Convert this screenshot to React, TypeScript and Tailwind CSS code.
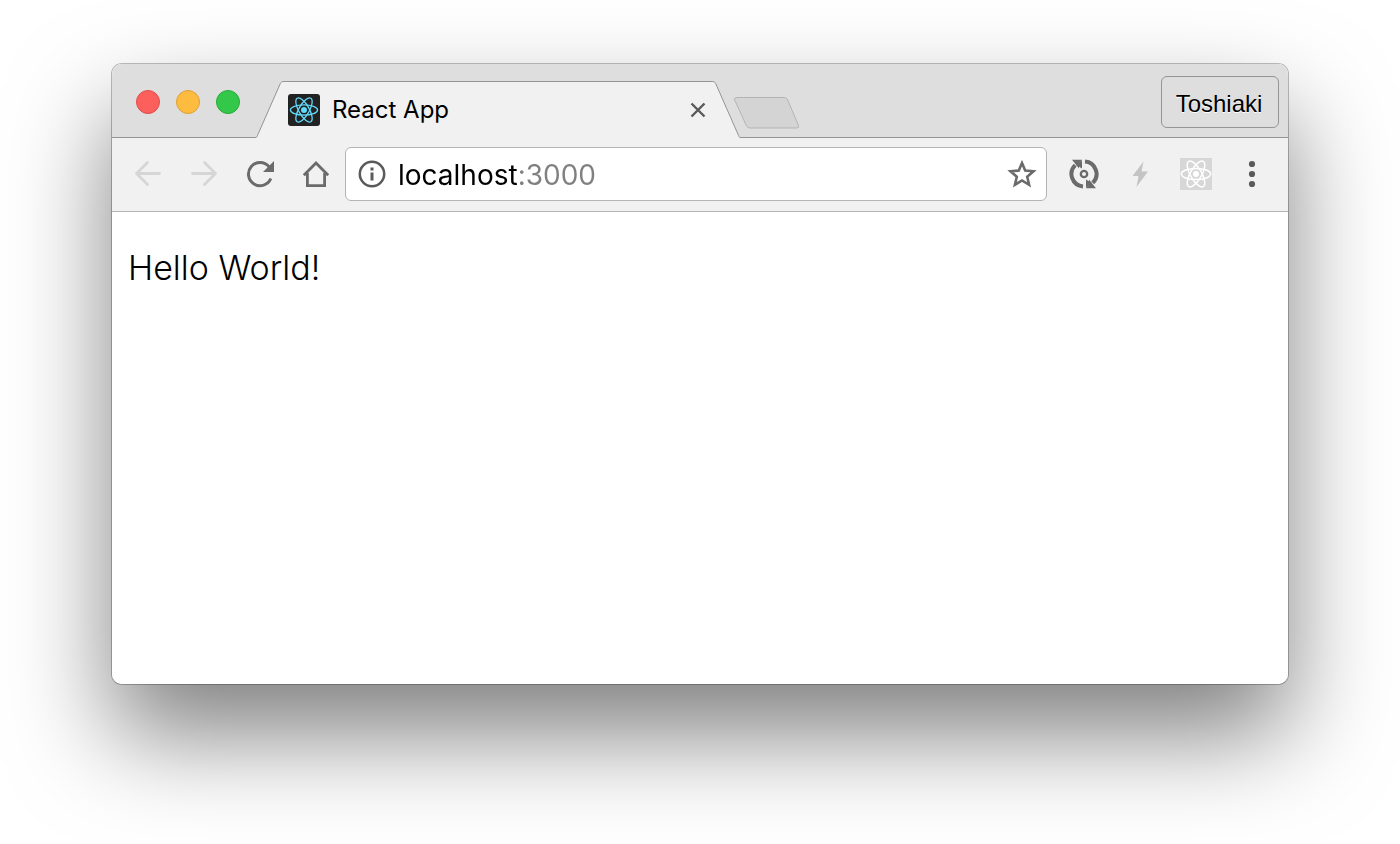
import { useState } from "react";
import type { ReactNode } from "react";

const ReactLogo = ({ className, dot = 3 }: { className?: string; dot?: number }) => (
  <svg viewBox="0 0 32 32" className={className} fill="none" stroke="currentColor" strokeWidth="1.3">
    <circle cx="16" cy="16" r={dot} fill="currentColor" stroke="none" />
    <ellipse cx="16" cy="16" rx="13.6" ry="5.2" />
    <ellipse cx="16" cy="16" rx="13.6" ry="5.2" transform="rotate(60 16 16)" />
    <ellipse cx="16" cy="16" rx="13.6" ry="5.2" transform="rotate(120 16 16)" />
  </svg>
);

const ToolbarButton = ({
  label,
  disabled,
  children,
}: {
  label: string;
  disabled?: boolean;
  children: ReactNode;
}) => (
  <button
    type="button"
    aria-label={label}
    disabled={disabled}
    className="flex h-14 w-14 shrink-0 items-center justify-center text-[#6b6b6b] disabled:text-[#d6d6d6]"
  >
    {children}
  </button>
);

const ArrowIcon = ({ className }: { className?: string }) => (
  <svg
    viewBox="0 0 32 32"
    className={className}
    fill="none"
    stroke="currentColor"
    strokeWidth="2.8"
    strokeLinecap="round"
    strokeLinejoin="round"
  >
    <path d="M27.5 15.5H4.5M15.5 4.5l-11 11 11 11" />
  </svg>
);

const TrafficLights = () => (
  <div className="flex shrink-0 gap-4 pt-[26px] pl-6">
    <button type="button" aria-label="Close" className="size-6 rounded-full border border-[#e24b48] bg-[#fc605c]" />
    <button type="button" aria-label="Minimize" className="size-6 rounded-full border border-[#dfa033] bg-[#fdbc40]" />
    <button type="button" aria-label="Zoom" className="size-6 rounded-full border border-[#27aa35] bg-[#34c84a]" />
  </div>
);

const Tab = () => (
  <div className="mt-[17px] ml-4 flex h-[57px] w-[484px] shrink text-[#949494]">
    <svg viewBox="0 0 28 57" className="h-[57px] w-7 shrink-0">
      <path d="M0 57V56.5C.6 56.3 1 55.6 1.5 54.4L24.2 2.8C25 1.2 26 .5 28 .5V57Z" fill="#f1f1f1" />
      <path d="M0 56.5C.6 56.3 1 55.6 1.5 54.4L24.2 2.8C25 1.2 26 .5 28 .5" fill="none" stroke="currentColor" />
    </svg>
    <div className="flex min-w-0 flex-1 items-center border-t border-current bg-[#f1f1f1] pl-1">
      <span className="flex size-8 shrink-0 items-center justify-center rounded-[3px] bg-[#222]">
        <ReactLogo className="size-8 text-[#61dafb]" />
      </span>
      <span className="ml-3 flex-1 truncate font-['Inter',sans-serif] text-2xl text-black">React App</span>
      <button type="button" aria-label="Close tab" className="mr-0.5 flex size-6 items-center justify-center text-[#5a5a5a]">
        <svg viewBox="0 0 24 24" className="size-6" fill="none" stroke="currentColor" strokeWidth="2.4">
          <path d="M5.5 5.5l13 13M18.5 5.5l-13 13" />
        </svg>
      </button>
    </div>
    <svg viewBox="0 0 28 57" className="h-[57px] w-7 shrink-0">
      <path d="M28 57V56.5C27.4 56.3 27 55.6 26.5 54.4L3.8 2.8C3 1.2 2 .5 0 .5V57Z" fill="#f1f1f1" />
      <path d="M28 56.5C27.4 56.3 27 55.6 26.5 54.4L3.8 2.8C3 1.2 2 .5 0 .5" fill="none" stroke="currentColor" />
    </svg>
  </div>
);

const TabStrip = () => (
  <div className="flex h-[74px] bg-[#dedede] bg-[linear-gradient(#949494,#949494)] bg-[length:100%_1px] bg-bottom bg-no-repeat">
    <TrafficLights />
    <Tab />
    <button type="button" aria-label="New tab" className="-ml-2 mt-8 h-9 w-[70px] shrink-0">
      <svg viewBox="0 0 70 36" className="h-9 w-[70px]">
        <path
          d="M5 1.5H52Q54.5 1.5 55.7 4L66.3 29Q67.5 32 65 32H18Q15.5 32 14.3 29.5L2.7 4Q1.8 1.5 5 1.5Z"
          fill="#d4d4d4"
          stroke="#b4b4b4"
        />
      </svg>
    </button>
    <button
      type="button"
      className="mt-3 mr-[9px] ml-auto h-[52px] w-[118px] shrink-0 rounded-md border border-[#949494] pt-1 pr-0.5 font-['Liberation_Sans',sans-serif] text-2xl text-black text-shadow-[0_1px_0_#fff]"
    >
      Toshiaki
    </button>
  </div>
);

const AddressBar = () => {
  const [url, setUrl] = useState("localhost:3000");

  return (
    <div className="mr-[9px] ml-px flex h-[54px] min-w-0 flex-1 items-center rounded-md border border-[#b4b4b4] bg-white pr-2 pl-3">
      <svg viewBox="0 0 28 28" className="size-7 shrink-0 text-[#5a5a5a]">
        <circle cx="14" cy="14" r="12.2" fill="none" stroke="currentColor" strokeWidth="2.5" />
        <path d="M12.5 7.5h3v3h-3zM12.5 12.5h3v8h-3z" fill="currentColor" />
      </svg>
      {/* host in black, port in gray */}
      <input
        type="text"
        aria-label="Address"
        value={url}
        onChange={(e) => setUrl(e.target.value)}
        className="ml-3 min-w-0 flex-1 bg-[linear-gradient(to_right,#000_119px,#808080_119px)] bg-clip-text pt-0.5 font-['Inter',sans-serif] text-[28px] text-transparent caret-black outline-none"
      />
      <button type="button" aria-label="Bookmark this page" className="shrink-0 text-[#6b6b6b]">
        <svg viewBox="0 0 32 32" className="size-8" fill="none" stroke="currentColor" strokeWidth="2.6">
          <path d="M16 5l3.2 7.6 8.3.7-6.3 5.4 1.9 8.1-7.1-4.3-7.1 4.3 1.9-8.1-6.3-5.4 8.3-.7z" />
        </svg>
      </button>
    </div>
  );
};

const Toolbar = () => (
  <div className="flex h-[74px] items-center border-b border-[#b4b4b4] bg-[#f1f1f1] px-2 pb-0.5">
    <ToolbarButton label="Back" disabled>
      <ArrowIcon className="size-8" />
    </ToolbarButton>
    <ToolbarButton label="Forward" disabled>
      <ArrowIcon className="size-8 -scale-x-100" />
    </ToolbarButton>
    <ToolbarButton label="Reload">
      <svg viewBox="0 0 32 32" className="size-8">
        <path d="M26.8 20.5A11.6 11.6 0 1 1 25 8.7" fill="none" stroke="currentColor" strokeWidth="3" />
        <path d="M30 3v11H19z" fill="currentColor" />
      </svg>
    </ToolbarButton>
    <ToolbarButton label="Home">
      <svg viewBox="0 0 32 32" className="size-8" fill="none" stroke="currentColor" strokeWidth="2.8">
        <path d="M3.8 17.2L16 5l12.2 12.2M7.4 15v12.6h17.2V15" />
      </svg>
    </ToolbarButton>
    <AddressBar />
    <ToolbarButton label="Sync">
      <svg viewBox="0 0 32 32" className="size-8" fill="none" stroke="currentColor">
        <path d="M15 28.4A12.4 12.4 0 0 1 7.2 7.2M17 3.6A12.4 12.4 0 0 1 24.8 24.8" strokeWidth="4" />
        <path d="M4 1.8h10l-3 3v5.7zM28 30.2H18l3-3v-5.7z" fill="currentColor" stroke="none" />
        <path d="M14 2v8.5L8 7zM18 30v-8.5l6 3.5z" fill="currentColor" stroke="none" />
        <circle cx="16" cy="16" r="3.2" strokeWidth="2.3" />
      </svg>
    </ToolbarButton>
    <ToolbarButton label="Flash">
      <svg viewBox="0 0 32 32" className="size-8 text-[#c4c4c4]">
        <path d="M19.5 3.5L8.5 18h6L12.5 29 24 13.5h-6.5z" fill="currentColor" />
      </svg>
    </ToolbarButton>
    <ToolbarButton label="React Developer Tools">
      <span className="size-8 bg-[#d7d7d7] text-white">
        <svg viewBox="0 0 32 32" className="size-8" fill="none" stroke="currentColor" strokeWidth="1.5">
          <circle cx="16" cy="16" r="3" fill="currentColor" stroke="none" />
          <ellipse cx="16" cy="16" rx="14.6" ry="5.6" />
          <ellipse cx="16" cy="16" rx="14.6" ry="5.6" transform="rotate(60 16 16)" />
          <ellipse cx="16" cy="16" rx="14.6" ry="5.6" transform="rotate(120 16 16)" />
        </svg>
      </span>
    </ToolbarButton>
    <ToolbarButton label="Menu">
      <svg viewBox="0 0 32 32" className="size-8 text-[#5a5a5a]" fill="currentColor">
        <circle cx="16" cy="6" r="3.1" />
        <circle cx="16" cy="16" r="3.1" />
        <circle cx="16" cy="26" r="3.1" />
      </svg>
    </ToolbarButton>
  </div>
);

const App = () => {
  return (
    <div className="min-h-screen bg-white px-28 pt-16 pb-40">
      <div className="rounded-[10px] shadow-[0_0_0_1px_rgba(0,0,0,0.25),0_50px_100px_rgba(0,0,0,0.5)]">
        <div className="overflow-hidden rounded-[10px] bg-white">
          <TabStrip />
          <Toolbar />
          <main className="min-h-[472px] px-4 py-8">
            <p className="font-['Inter',sans-serif] text-[34px] leading-12 font-light text-black">Hello World!</p>
          </main>
        </div>
      </div>
    </div>
  );
};

export default App;
